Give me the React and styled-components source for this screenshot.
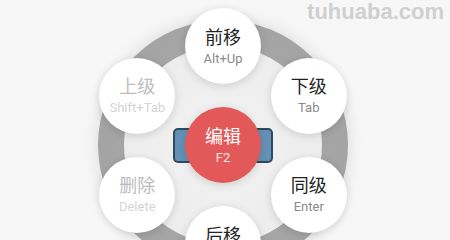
import React from 'react';
import styled, { createGlobalStyle } from 'styled-components';

const GlobalStyle = createGlobalStyle`
  html, body {
    margin: 0;
    padding: 0;
    background: #f7f7f7;
  }
  body {
    font-family: Roboto, "Noto Sans CJK SC", "Liberation Sans", sans-serif;
  }
`;

const Stage = styled.div`
  position: relative;
  width: 450px;
  height: 240px;
  overflow: hidden;
  background: #f7f7f7;
  padding: 20px 0 0 98px;
  box-sizing: border-box;
`;

const Watermark = styled.div`
  position: absolute;
  top: 0;
  right: 6px;
  font-family: "Liberation Sans", Arial, sans-serif;
  font-weight: 700;
  font-size: 22px;
  line-height: 24px;
  color: #d0d0d0;
  z-index: 5;
`;

// outer grey ring; everything inside is stacked in one grid cell
const Wheel = styled.div`
  position: relative;
  width: 250px;
  height: 250px;
  border-radius: 50%;
  background: radial-gradient(circle, #a8a8a8 0%, #a3a3a3 88%, #999999 100%);
  box-shadow: 0 0 18px rgba(0, 0, 0, 0.12);
  display: grid;
  place-items: center;
`;

const Inner = styled.div`
  width: 198px;
  height: 198px;
  border-radius: 50%;
  background: radial-gradient(circle, #f2f2f2 0%, #ebebeb 100%);
  display: grid;
  place-items: center;
  & > * {
    grid-area: 1 / 1;
  }
`;

const Bar = styled.div`
  width: 96px;
  height: 31px;
  border: 2px solid #2f4a5e;
  border-radius: 5px;
  background: #6392b6;
`;

const Bubble = styled.div`
  width: 76px;
  height: 76px;
  border-radius: 50%;
  background: ${p => (p.$main ? '#e35858' : '#ffffff')};
  box-shadow: 0 2px 8px rgba(0, 0, 0, 0.14);
  display: flex;
  flex-direction: column;
  align-items: center;
  justify-content: center;
  gap: 5px;
  padding-bottom: 1px;
  box-sizing: border-box;
`;

// satellite bubbles sit on a circle around the centre (diagram nodes)
const Node = styled(Bubble)`
  position: absolute;
  left: ${p => p.$x - 38}px;
  top: ${p => p.$y - 38}px;
`;

const Label = styled.div`
  font-family: "Noto Sans CJK SC", sans-serif;
  font-size: 18px;
  line-height: 20px;
  color: ${p => (p.$main ? '#ffffff' : p.$off ? '#bdbdbd' : '#222222')};
`;

const Key = styled.div`
  font-family: Roboto, "Liberation Sans", sans-serif;
  font-size: 13px;
  line-height: 15px;
  color: ${p => (p.$main ? '#fde6e6' : p.$off ? '#d4d4d4' : '#8a8a8a')};
`;

const items = [
  { label: '前移', key: 'Alt+Up', angle: -90 },
  { label: '下级', key: 'Tab', angle: -30 },
  { label: '同级', key: 'Enter', angle: 30 },
  { label: '后移', key: 'Alt+Down', angle: 90 },
  { label: '删除', key: 'Delete', angle: 150, off: true },
  { label: '上级', key: 'Shift+Tab', angle: 210, off: true },
];

const C = 125;
const R = 99;

export default function App() {
  return (
    <>
      <GlobalStyle />
      <Stage>
        <Watermark>tuhuaba.com</Watermark>
        <Wheel>
          <Inner>
            <Bar />
            <Bubble $main>
              <Label $main>编辑</Label>
              <Key $main>F2</Key>
            </Bubble>
          </Inner>
          {items.map(it => {
            const a = (it.angle * Math.PI) / 180;
            return (
              <Node key={it.label} $x={C + R * Math.cos(a)} $y={C + R * Math.sin(a)}>
                <Label $off={it.off}>{it.label}</Label>
                <Key $off={it.off}>{it.key}</Key>
              </Node>
            );
          })}
        </Wheel>
      </Stage>
    </>
  );
}
